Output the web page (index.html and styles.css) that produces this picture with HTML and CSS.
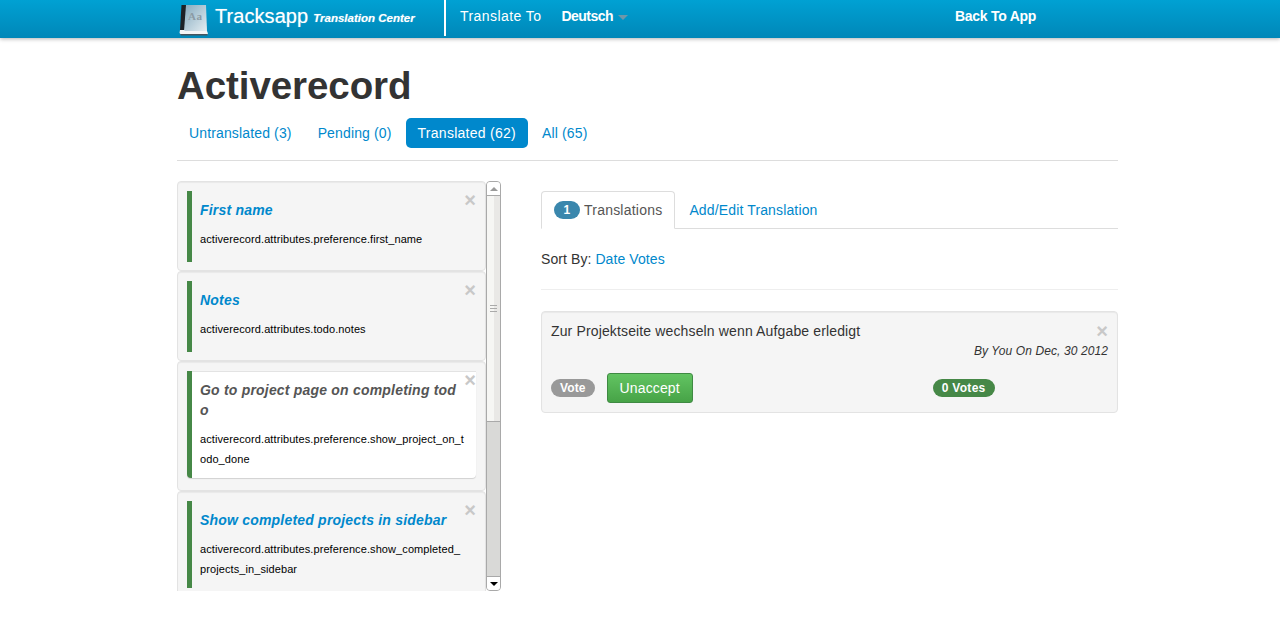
FILE: index.html
```html
<!DOCTYPE html>
<html lang="en">
<head>
<meta charset="utf-8">
<title>Tracksapp Translation Center</title>
<link rel="stylesheet" href="styles.css">
</head>
<body>
<header class="navbar">
  <div class="navbar-inner">
    <a class="brand">
      <svg class="logo" width="31" height="36" viewBox="0 0 31 36" aria-hidden="true">
        <defs>
          <linearGradient id="cover" x1="0" y1="0" x2="1" y2="1">
            <stop offset="0" stop-color="#86aabd"/>
            <stop offset="0.55" stop-color="#b9cfdb"/>
            <stop offset="1" stop-color="#e4edf1"/>
          </linearGradient>
        </defs>
        <path d="M3 29 L4.500 4 L10 4 L8 29 Z" fill="#1d2227"/>
        <path d="M9 4 H29 L30 30 H7 Z" fill="url(#cover)"/>
        <path d="M3 29 L8 29 L7 30 H30 L31 32.500 L30 33.500 H4 L2.500 32 Z" fill="#f3f5f6"/>
        <path d="M3 33 H30.500 V34.500 H4 Z" fill="#46545c"/>
        <text x="11" y="19" class="logo-text">Aa</text>
      </svg>
      <span class="brand-name">Tracksapp</span>
      <em class="brand-sub">Translation Center</em>
    </a>
    <div class="nav-divider"></div>
    <span class="nav-label">Translate To</span>
    <a class="nav-lang">Deutsch<span class="caret"></span></a>
    <a class="nav-back">Back To App</a>
  </div>
</header>

<main class="page">
  <h1 class="title">Activerecord</h1>
  <nav class="pills">
    <a class="pill">Untranslated (3)</a>
    <a class="pill">Pending (0)</a>
    <a class="pill active">Translated (62)</a>
    <a class="pill">All (65)</a>
  </nav>
  <hr class="rule">

  <div class="columns">
    <section class="side">
      <div class="list">
        <article class="card">
          <span class="close">×</span>
          <div class="card-inner">
            <h4 class="key-title">First name</h4>
            <p class="key-path">activerecord.attributes.preference.first_name</p>
          </div>
        </article>
        <article class="card">
          <span class="close">×</span>
          <div class="card-inner">
            <h4 class="key-title">Notes</h4>
            <p class="key-path">activerecord.attributes.todo.notes</p>
          </div>
        </article>
        <article class="card current">
          <span class="close">×</span>
          <div class="card-inner">
            <h4 class="key-title">Go to project page on completing todo</h4>
            <p class="key-path">activerecord.attributes.preference.show_project_on_todo_done</p>
          </div>
        </article>
        <article class="card">
          <span class="close">×</span>
          <div class="card-inner">
            <h4 class="key-title">Show completed projects in sidebar</h4>
            <p class="key-path">activerecord.attributes.preference.show_completed_projects_in_sidebar</p>
          </div>
        </article>
      </div>
      <div class="scrollbar">
        <div class="sb-btn sb-up"><span class="arrow-up"></span></div>
        <div class="sb-thumb"><span class="grip"></span></div>
        <div class="sb-track"></div>
        <div class="sb-btn sb-down"><span class="arrow-down"></span></div>
      </div>
    </section>

    <section class="detail">
      <div class="tabs">
        <a class="tab active"><span class="count">1</span>Translations</a>
        <a class="tab">Add/Edit Translation</a>
      </div>
      <p class="sort">Sort By: <a>Date</a> <a>Votes</a></p>
      <hr class="rule-light">
      <article class="translation">
        <span class="close close-t">×</span>
        <p class="t-text">Zur Projektseite wechseln wenn Aufgabe erledigt</p>
        <p class="t-meta">By You On Dec, 30 2012</p>
        <div class="t-actions">
          <span class="badge badge-grey">Vote</span>
          <a class="btn-success">Unaccept</a>
          <span class="badge badge-green">0 Votes</span>
        </div>
      </article>
    </section>
  </div>
</main>
</body>
</html>
```
FILE: styles.css
```css
* { box-sizing: border-box; }
html, body { height: 100%; }
body {
  margin: 0;
  overflow: hidden;
  background: #fff;
  color: #333;
  font-family: "Liberation Sans", Arial, sans-serif;
  font-size: 14px;
  line-height: 20px;
  letter-spacing: .14px;
}
a { color: #0088cc; text-decoration: none; }

.navbar {
  height: 38px;
  background: linear-gradient(#00a1d3, #0087b8);
  box-shadow: 0 1px 4px rgba(0, 0, 0, .3);
  color: #fff;
}
.navbar-inner {
  width: 941px;
  margin-left: 177px;
  height: 38px;
  display: flex;
  align-items: flex-start;
  position: relative;
}
.brand { display: flex; align-items: flex-start; color: #fff; width: 267px; text-shadow: 0 0 1px rgba(255, 255, 255, .5); }
.logo { margin-top: 1px; flex: none; }
.logo-text { font-family: "Liberation Serif", serif; font-size: 11px; font-weight: bold; fill: #8b9ba5; letter-spacing: .5px; text-shadow: none; }
.brand-name { margin-left: 7px; font-size: 20px; line-height: 32px; letter-spacing: .07px; }
.brand-sub { margin-left: 5px; margin-top: 8px; font-size: 11.500px; line-height: 20px; font-weight: bold; font-style: italic; letter-spacing: 0; }
.nav-divider { width: 2px; height: 36px; background: #fff; flex: none; }
.nav-label { margin-left: 14px; line-height: 32px; letter-spacing: .43px; }
.nav-lang { margin-left: 20px; color: #fff; font-weight: bold; line-height: 32px; display: flex; letter-spacing: -.5px; }
.caret {
  margin: 15px 0 0 5px;
  width: 0; height: 0;
  border: 5px solid transparent;
  border-top: 5px solid #6f97a9;
  border-bottom: 0;
}
.nav-back { position: absolute; left: 778px; top: 0; color: #fff; font-weight: bold; line-height: 32px; letter-spacing: -.27px; }

.page { width: 941px; margin-left: 177px; }
.title {
  margin: 26px 0 0;
  font-size: 38.500px;
  line-height: 44px;
  font-weight: bold;
  color: #333;
  letter-spacing: -.08px;
}
.pills { display: flex; gap: 2px; margin-top: 10px; }
.pill { padding: 5px 12px; border-radius: 5px; line-height: 20px; }
.pill.active { background: #0088cc; color: #fff; letter-spacing: .27px; }
.rule { margin: 12px 0 20px; border: 0; border-top: 1px solid #dddddd; height: 0; }

.columns { display: flex; align-items: flex-start; }
.side { width: 324px; height: 410px; display: flex; overflow: hidden; flex: none; }
.list { width: 309px; flex: none; }
.card {
  position: relative;
  background: #f5f5f5;
  border: 1px solid #e3e3e3;
  border-radius: 4px;
  padding: 9px;
  padding-bottom: 8px;
  box-shadow: inset 0 1px 1px rgba(0, 0, 0, .05);
}
.card.current { padding-bottom: 12px; }
.card-inner {
  min-height: 71px;
  border-left: 5px solid #468847;
  padding: 9px 12px 9px 8px;
}
.current .card-inner {
  background: #fff;
  border-radius: 0 0 4px 4px;
  box-shadow: inset 0 1px 0 #e3e3e3, 0 1px 1px rgba(0, 0, 0, .15);
}
.key-title {
  margin: 0 0 9px;
  color: #0088cc;
  font-size: 14px;
  line-height: 20px;
  font-weight: bold;
  font-style: italic;
  word-break: break-all;
  letter-spacing: .2px;
}
.current .key-title { color: #555; }
.key-path {
  margin: 0;
  color: #000;
  font-size: 11px;
  line-height: 20px;
  word-break: break-all;
  letter-spacing: .09px;
}
.close {
  position: absolute;
  right: 9px;
  top: 8px;
  color: #c8c8c8;
  font-size: 20px;
  font-weight: bold;
  line-height: 20px;
  letter-spacing: 0;
}

.scrollbar {
  width: 15px;
  height: 410px;
  border: 1px solid #a9a9a9;
  border-radius: 4px;
  display: flex;
  flex-direction: column;
  background: #d9d9d7;
  overflow: hidden;
}
.sb-btn { height: 14px; background: #fff; display: flex; align-items: center; justify-content: center; flex: none; }
.sb-up { border-bottom: 1px solid #a9a9a9; }
.sb-down { border-top: 1px solid #a9a9a9; }
.arrow-up { width: 0; height: 0; border: 4px solid transparent; border-top: 0; border-bottom: 4px solid #9a9a9a; }
.arrow-down { width: 0; height: 0; border: 4px solid transparent; border-bottom: 0; border-top: 4px solid #000; }
.sb-thumb {
  height: 226px;
  flex: none;
  background: linear-gradient(90deg, #f6f6f4 50%, #e9e8e6 50%);
  border-bottom: 1px solid #a9a9a9;
  display: flex;
  align-items: center;
  justify-content: center;
}
.grip { width: 7px; height: 7px; border-top: 1px solid #aaa; border-bottom: 1px solid #aaa; position: relative; }
.grip::after { content: ""; position: absolute; left: 0; right: 0; top: 2px; border-top: 1px solid #aaa; }
.sb-track { flex: 1; }

.detail { width: 577px; margin-left: 40px; flex: none; padding-top: 10px; }
.tabs { display: flex; height: 38px; border-bottom: 1px solid #ddd; }
.tab { padding: 8px 12px 9px; margin-left: 1px; line-height: 20px; border: 1px solid transparent; height: 38px; }
.tab.active {
  margin-left: 0;
  color: #555;
  background: #fff;
  border-color: #ddd #ddd #fff;
  border-radius: 4px 4px 0 0;
  display: flex;
  align-items: center;
  height: 38px;
  letter-spacing: .22px;
}
.count {
  display: block;
  width: 26px;
  height: 18px;
  margin-right: 4px;
  border-radius: 9px;
  background: #3a87ad;
  color: #fff;
  font-size: 12px;
  font-weight: bold;
  line-height: 18px;
  text-align: center;
}
.sort { margin: 20px 0 0; line-height: 20px; letter-spacing: .08px; }
.rule-light { margin: 20px 0 21px; border: 0; border-top: 1px solid #eeeeee; height: 0; }
.translation {
  position: relative;
  height: 102px;
  padding: 9px;
  background: #f5f5f5;
  border: 1px solid #e3e3e3;
  border-radius: 4px;
  box-shadow: inset 0 1px 1px rgba(0, 0, 0, .05);
}
.close-t { top: 9px; right: 9px; }
.t-text { margin: 0; line-height: 20px; }
.t-meta { margin: 0; font-size: 12px; font-style: italic; line-height: 20px; text-align: right; letter-spacing: .1px; }
.t-actions { display: flex; align-items: center; margin-top: 12px; height: 30px; }
.badge {
  display: block;
  height: 18px;
  padding: 0 9px;
  border-radius: 9px;
  color: #fff;
  font-size: 12px;
  font-weight: bold;
  line-height: 18px;
}
.badge-grey { background: #999; }
.badge-green { background: #468847; margin-left: 240px; letter-spacing: .3px; }
.btn-success {
  display: block;
  margin-left: 12px;
  width: 86px;
  height: 30px;
  border: 1px solid #3f8a43;
  border-radius: 3px;
  background: linear-gradient(#62c462, #47a347);
  color: #fff;
  line-height: 28px;
  text-align: center;
  font-size: 14px;
}
```
